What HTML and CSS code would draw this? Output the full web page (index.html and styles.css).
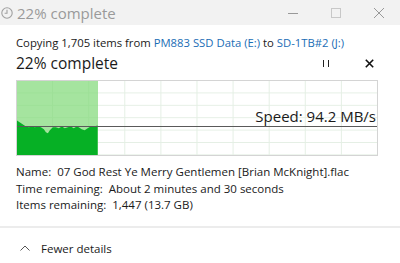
FILE: index.html
```html
<!DOCTYPE html>
<html lang="en">
<head>
    <meta charset="UTF-8">
    <meta name="viewport" content="width=device-width, initial-scale=1.0">
    <title>22% complete</title>
    <link rel="stylesheet" href="styles.css">
</head>
<body>
    <div class="window">
        <div class="titlebar">
            <div class="title">
                <svg class="clock" width="12" height="12" viewBox="0 0 12 12">
                    <circle cx="6" cy="6" r="5.2" fill="none" stroke="#a0a0a0" stroke-width="1.1"/>
                    <path d="M6 2.8V6.3H3.6" fill="none" stroke="#a0a0a0" stroke-width="1.1"/>
                </svg>
                <span>22% complete</span>
            </div>
            <div class="controls">
                <span class="ctl"><svg width="10" height="10" viewBox="0 0 10 10"><path d="M0 5.5H10" stroke="#999" stroke-width="1"/></svg></span>
                <span class="ctl"><svg width="10" height="10" viewBox="0 0 10 10"><rect x="0.5" y="0.5" width="9" height="9" fill="none" stroke="#c8c8c8" stroke-width="1"/></svg></span>
                <span class="ctl"><svg width="10" height="10" viewBox="0 0 10 10"><path d="M0 0L10 10M10 0L0 10" stroke="#999" stroke-width="1"/></svg></span>
            </div>
        </div>

        <div class="content">
            <p class="copying">Copying 1,705 items from <a href="#">PM883 SSD Data (E:)</a> to <a href="#">SD-1TB#2 (J:)</a></p>
            <div class="status-row">
                <h1>22% complete</h1>
                <div class="actions">
                    <span class="pause"></span>
                    <svg class="cancel" width="9" height="9" viewBox="0 0 9 9"><path d="M0.8 0.8L8.2 8.2M8.2 0.8L0.8 8.2" stroke="#111" stroke-width="1.6"/></svg>
                </div>
            </div>

            <div class="graph">
                <div class="done">
                    <svg width="100%" height="100%" viewBox="0 0 81 75" preserveAspectRatio="none">
                        <path d="M0 40 L3 42 L6 44 L9 46 L12 47 L15 46 L18 47 L21 46 L24 47 L27 49 L29 52 L31 53 L33 50 L36 47 L39 47 L42 48 L45 46 L48 48 L51 47 L54 46 L57 48 L60 46 L62 47 L65 49 L68 50 L71 48 L74 46 L77 46 L81 45 L81 75 L0 75 Z" fill="#06b025"/>
                    </svg>
                </div>
                <div class="speed-line"></div>
                <div class="speed">Speed: 94.2 MB/s</div>
            </div>

            <div class="details">
                <p>Name:&nbsp; 07 God Rest Ye Merry Gentlemen [Brian McKnight].flac</p>
                <p>Time remaining:&nbsp; About 2 minutes and 30 seconds</p>
                <p>Items remaining:&nbsp; 1,447 (13.7 GB)</p>
            </div>
        </div>

        <div class="footer">
            <svg class="chevron" width="10" height="6" viewBox="0 0 10 6"><path d="M0.5 5.5L5 1L9.5 5.5" fill="none" stroke="#555" stroke-width="1"/></svg>
            <span>Fewer details</span>
        </div>
    </div>
</body>
</html>
```

FILE: styles.css
```css
body {
    margin: 0;
    padding: 0;
    overflow: hidden;
    background: #fff;
    font-family: "Open Sans", "Noto Sans", sans-serif;
    color: #1a1a1a;
}

.window {
    width: 400px;
    height: 263px;
    display: flex;
    flex-direction: column;
}

.titlebar {
    height: 25px;
    background-color: #f2f2f2;
    display: flex;
    justify-content: space-between;
    align-items: center;
}

.title {
    display: flex;
    align-items: center;
    gap: 4px;
    padding-left: 1px;
    color: #9a9a9a;
    font-size: 15px;
}

.controls {
    display: flex;
}

.ctl {
    width: 43px;
    height: 25px;
    display: flex;
    justify-content: center;
    align-items: center;
}

.content {
    padding: 10px 22px 0 16px;
}

.copying {
    margin: 0;
    font-size: 11.3px;
    line-height: 16px;
}

.copying a {
    color: #1a6db5;
    text-decoration: none;
}

.status-row {
    display: flex;
    justify-content: space-between;
    align-items: center;
    height: 24px;
    margin-bottom: 5px;
}

h1 {
    margin: 0;
    font-size: 15.5px;
    font-weight: 400;
}

.actions {
    display: flex;
    align-items: center;
    gap: 36px;
    padding-right: 4px;
}

.pause {
    width: 4px;
    height: 7px;
    border-left: 1.5px solid #222;
    border-right: 1.5px solid #222;
}

.graph {
    position: relative;
    height: 74px;
    border: 1px solid #d4d4d4;
    background-color: #fff;
    background-image:
        linear-gradient(to right, transparent 35px, #e4efe4 35px, #e4efe4 36px, transparent 36px),
        linear-gradient(to bottom, transparent 11.4px, #e4efe4 11.4px, #e4efe4 12.4px, transparent 12.4px);
    background-size: 36.1px 100%, 100% 12.4px;
}

.done {
    width: 22.4%;
    height: 100%;
    background-color: rgba(130, 218, 122, 0.72);
}

.done svg {
    display: block;
}

.speed-line {
    position: absolute;
    left: 0;
    right: 0;
    top: 45px;
    height: 1px;
    background-color: #5a5a5a;
}

.speed {
    position: absolute;
    right: 1px;
    top: 25px;
    font-size: 15px;
    color: #1a1a1a;
}

.details {
    padding-top: 8px;
}

.details p {
    margin: 0;
    font-size: 11.5px;
    line-height: 16.5px;
}

.footer {
    margin-top: auto;
    height: 37px;
    border-top: 2px solid #ececec;
    display: flex;
    align-items: center;
    gap: 11px;
    padding-left: 20px;
    padding-top: 5px;
    box-sizing: border-box;
    font-size: 11.5px;
    color: #1a1a1a;
}
```
